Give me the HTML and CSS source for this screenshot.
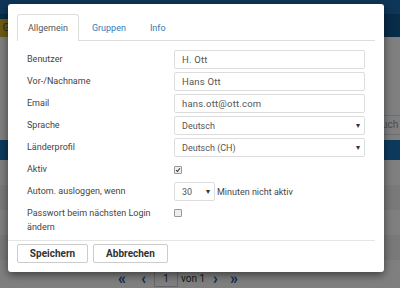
FILE: index.html
```html
<!DOCTYPE html>
<html lang="de">
<head>
<meta charset="utf-8">
<title>Benutzer bearbeiten</title>
<link rel="stylesheet" href="styles.css">
</head>
<body>
<div class="page">
  <div class="topbar"></div>
  <div class="navbar"><div class="logo">G</div></div>
  <div class="content">
    <div class="toolbar"><div class="search">Such</div></div>
    <div class="thead"></div>
    <div class="row"></div>
    <div class="row alt"></div>
    <div class="row"></div>
    <div class="row alt"></div>
    <div class="pager">
      <span class="pg first">&laquo;</span>
      <span class="pg prev">&lsaquo;</span>
      <span class="pbox">1</span>
      <span class="ptext">von 1</span>
      <span class="pg next">&rsaquo;</span>
      <span class="pg last">&raquo;</span>
    </div>
  </div>
</div>
<div class="backdrop"></div>
<div class="modal">
  <div class="modal-body">
    <ul class="tabs">
      <li class="tab active">Allgemein</li>
      <li class="tab">Gruppen</li>
      <li class="tab">Info</li>
    </ul>
    <form class="form">
      <label class="lbl">Benutzer</label>
      <div class="field"><input class="input" type="text" value="H. Ott"></div>
      <label class="lbl">Vor-/Nachname</label>
      <div class="field"><input class="input" type="text" value="Hans Ott"></div>
      <label class="lbl">Email</label>
      <div class="field"><input class="input" type="text" value="hans.ott@ott.com"></div>
      <label class="lbl">Sprache</label>
      <div class="field"><div class="select"><span>Deutsch</span><span class="caret">&#9662;</span></div></div>
      <label class="lbl">Länderprofil</label>
      <div class="field"><div class="select"><span>Deutsch (CH)</span><span class="caret">&#9662;</span></div></div>
      <label class="lbl">Aktiv</label>
      <div class="field"><span class="check checked"><svg viewBox="0 0 8 8" width="8" height="8"><path d="M1.5 4.2 L3.3 6 L6.6 1.6" fill="none" stroke="#333" stroke-width="1.4"/></svg></span></div>
      <label class="lbl">Autom. ausloggen, wenn</label>
      <div class="field inline"><div class="select small"><span>30</span><span class="caret">&#9662;</span></div><span class="after">Minuten nicht aktiv</span></div>
      <label class="lbl two">Passwort beim nächsten Login ändern</label>
      <div class="field top"><span class="check"></span></div>
    </form>
  </div>
  <div class="modal-footer">
    <button class="btn" type="button">Speichern</button>
    <button class="btn" type="button">Abbrechen</button>
  </div>
</div>
</body>
</html>
```
FILE: styles.css
```css
* { box-sizing: border-box; }
html, body { margin: 0; padding: 0; }
body {
  width: 400px;
  height: 288px;
  overflow: hidden;
  font-family: Roboto, "Liberation Sans", sans-serif;
  font-size: 9px;
  color: #444;
  background: #fff;
  position: relative;
}
.page { display: flex; flex-direction: column; height: 288px; }
.topbar { height: 17px; background: #1a6db0; }
.navbar { height: 25px; background: #0e5890; padding-top: 5px; }
.logo { width: 10px; height: 18px; background: #dcb428; color: #555; font-size: 11px; line-height: 18px; text-align: right; overflow: hidden; }
.content { flex: 1; display: flex; flex-direction: column; }
.toolbar { height: 103px; padding-top: 78px; padding-left: 372px; }
.search { height: 20px; width: 40px; border: 1px solid #ddd; background: #fff; color: #999; font-size: 10px; line-height: 18px; padding-left: 3px; }
.thead { height: 20px; background: #1a74b8; }
.row { height: 25px; background: #fff; }
.row.alt { background: #f2f2f2; }
.pager { display: flex; align-items: center; padding-left: 118px; padding-top: 9px; color: #145eaa; font-size: 16px; font-weight: bold; }
.pg.prev { margin-left: 15px; }
.pbox { margin-left: 8px; width: 24px; height: 16px; border: 1px solid #ccc; color: #333; font-size: 10px; font-weight: normal; text-align: center; line-height: 14px; }
.ptext { color: #333; font-size: 10px; font-weight: normal; margin-left: 3px; }
.pg.next { margin-left: 8px; }
.pg.last { margin-left: 12px; }

.backdrop { position: absolute; inset: 0; background: rgba(0,0,0,0.5); }

.modal {
  position: absolute;
  left: 8px;
  top: 4px;
  width: 376px;
  height: 268px;
  background: #fff;
  border-radius: 3px;
  box-shadow: 0 3px 8px rgba(0,0,0,0.5);
  display: flex;
  flex-direction: column;
}
.modal-body { padding: 10px 9px 0 9px; }
.tabs { list-style: none; margin: 0; padding: 0; display: flex; border-bottom: 1px solid #ddd; height: 27px; }
.tab { padding: 0 10px; margin-right: 2px; line-height: 26px; color: #337ab7; border: 1px solid transparent; border-bottom: none; }
.tab.active { color: #555; border-color: #ddd; border-radius: 3px 3px 0 0; background: #fff; height: 27px; }
.form { display: grid; grid-template-columns: 147px 1fr; row-gap: 3px; padding: 9px 10px 0 10px; align-items: center; }
.lbl { line-height: 19px; }
.lbl.two { line-height: 14px; align-self: start; padding-top: 2px; width: 135px; }
.field { height: 19px; display: flex; align-items: center; }
.field.top { align-self: start; height: auto; padding-top: 5px; }
.input { width: 100%; height: 19px; border: 1px solid #ddd; border-radius: 2px; padding: 0 7px; font: inherit; font-size: 9.5px; color: #555; letter-spacing: 0.2px; }
.select { width: 100%; height: 19px; border: 1px solid #ddd; border-radius: 2px; padding: 0 4px 0 7px; display: flex; justify-content: space-between; align-items: center; color: #555; font-size: 9px; }
.select.small { width: 41px; flex: none; }
.caret { font-size: 8px; color: #333; }
.after { margin-left: 2px; }
.check { width: 8px; height: 8px; border: 1px solid #999; border-radius: 1px; background: #eee; display: inline-flex; align-items: center; justify-content: center; }
.check svg { display: block; }
.modal-footer { margin-top: auto; margin-right: 9px; border-top: 1px solid #e5e5e5; padding: 3px 9px 9px 9px; display: flex; gap: 5px; }
.btn { height: 19px; border: 1px solid #ccc; border-radius: 2px; background: #fff; font-family: inherit; font-size: 10px; font-weight: bold; color: #333; padding: 0; }
.btn:first-child { width: 71px; }
.btn:last-child { width: 75px; }
```
